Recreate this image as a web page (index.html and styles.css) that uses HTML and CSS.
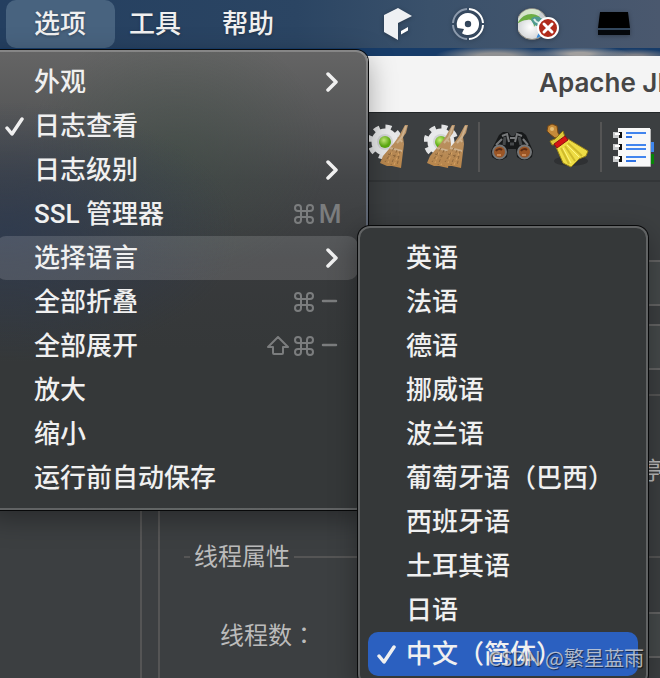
FILE: index.html
```html
<!DOCTYPE html>
<html lang="zh-CN">
<head>
  <meta charset="UTF-8" />
  <meta name="viewport" content="width=device-width, initial-scale=1" />
  <title>Apache JMeter</title>
  <link rel="stylesheet" href="styles.css">
</head>
<body>

  <nav class="menubar">
    <button type="button" class="menu-title open">选项</button>
    <button type="button" class="menu-title">工具</button>
    <button type="button" class="menu-title">帮助</button>

    <div class="status">
      <svg width="34" height="34" viewBox="0 0 34 34">
        <path d="M0 8 14 1 28 9 14 16V33L0 25Z" fill="#eef0f3"/>
        <path d="M17 24 24 20V23.500L17 27.500Z" fill="#fff"/>
      </svg>
      <svg width="32" height="34" viewBox="0 0 32 34">
        <g fill="none" stroke-width="2">
          <path d="M17 2A15 15 0 0 1 31 16M31 18A15 15 0 0 1 17 32" stroke="#fff"/>
          <path d="M15 32A15 15 0 0 1 1 18M1 16A15 15 0 0 1 15 2" stroke="#8d9bad"/>
        </g>
        <path fill="#fff" fill-rule="evenodd" d="M16 6A11 11 0 1 1 10 26.200L12 22 5.500 21A11 11 0 0 1 16 6ZM16 13.800A3.200 3.200 0 1 0 16 20.200 3.200 3.200 0 1 0 16 13.800Z"/>
      </svg>
      <svg width="42" height="34" viewBox="0 0 42 34">
        <defs>
          <radialGradient id="globe" cx=".45" cy=".6"><stop offset="0" stop-color="#fff"/><stop offset="1" stop-color="#c9cdd0"/></radialGradient>
          <clipPath id="globe-clip"><circle cx="14" cy="17" r="15"/></clipPath>
        </defs>
        <circle cx="14" cy="17" r="15.500" fill="url(#globe)" stroke="#8d8a80"/>
        <g clip-path="url(#globe-clip)">
          <path d="M-1 17C3 7 12 5 20 9L24 3 12 0 4 3Z" fill="#d5e5ca"/>
          <path d="M-1 17C4 7 14 4 22 10L16 20C16 14 12 11 9 13 5 13 2 15-1 17Z" fill="#6cae43"/>
          <path d="M13 12C18 7 24 10 29 17L24 20C18 20 14 17 13 12Z" fill="#4f9a91"/>
          <path d="M16 12C18 16 22 17 26 15" fill="none" stroke="#d7ebe4" stroke-width="2"/>
          <path d="M18 33C19 28 21 25 24 23V33Z" fill="#3d8bd4"/>
        </g>
        <circle cx="30" cy="21" r="10" fill="#b02b1c" stroke="#fff" stroke-width="2"/>
        <path d="M26 17 34 25M34 17 26 25" stroke="#fff" stroke-width="3" stroke-linecap="round"/>
      </svg>
      <svg width="40" height="34" viewBox="0 0 40 34">
        <path d="M6 5H34L36 21H4Z" fill="#000"/>
        <path d="M4 23H36V28H4Z" fill="#05080c"/>
        <path d="M4 22H36" stroke="#33475d" stroke-width="2"/>
      </svg>
    </div>
  </nav>

  <main class="window">
    <h1 class="titlebar">Apache JMeter</h1>

    <div class="toolbar">
      <button type="button" class="tool" aria-label="清除">
        <svg width="44" height="48" viewBox="0 0 44 48">
          <defs>
            <radialGradient id="dot" cx=".4" cy=".35"><stop offset="0" stop-color="#c8ef7a"/><stop offset="1" stop-color="#5cab10"/></radialGradient>
            <linearGradient id="straw" x2="0" y2="1"><stop offset="0" stop-color="#b9956c"/><stop offset="1" stop-color="#b8854a"/></linearGradient>
            <g id="gear">
              <circle cx="17" cy="19" r="15" fill="none" stroke="#e3e4e5" stroke-width="5" stroke-dasharray="5.900 5.880"/>
              <circle cx="17" cy="19" r="13.500" fill="#e9eaeb"/>
              <circle cx="17" cy="19" r="8" fill="#d3d4d6"/>
              <circle cx="17" cy="19" r="6" fill="url(#dot)"/>
            </g>
            <g id="besom">
              <path d="M37 2H40L38 10 35 14 36 21 33 45 24 43 19 43 12 40 15 33 26 20 31 13Z" fill="url(#straw)"/>
              <path d="M38 3 34 14 29 20M32 16 34 19M22 25 34 28" fill="none" stroke="#cdb08c" stroke-width="2"/>
              <path d="M26 25 17 39M29 27 23 42M32 28 29 43M20 31 31 34" fill="none" stroke="#8f683d" stroke-dasharray="3 2"/>
              <path d="M24 29 20 40M31 30 26 42" fill="none" stroke="#d6a263" stroke-dasharray="3 2"/>
            </g>
          </defs>
          <use href="#gear"/>
          <use href="#besom"/>
        </svg>
      </button>
      <button type="button" class="tool" aria-label="清除全部">
        <svg width="44" height="48" viewBox="0 0 44 48">
          <use href="#gear"/>
          <use href="#besom" x="-9"/>
          <use href="#besom" x="4"/>
        </svg>
      </button>
      <span class="separator"></span>
      <button type="button" class="tool" aria-label="查找">
        <svg width="44" height="48" viewBox="0 0 44 48">
          <path d="M9 12 13 9H18L21 13H24L27 9H32L36 12 43 28 42 34 37 37H32L27 34 26 26H18L17 34 12 37H7L2 34 1 28Z" fill="#17191a"/>
          <path d="M12 13 17 11 19 19M32 13 27 11 25 19M20 15H25M6 22 12 16M38 22 33 16" stroke="#77797b" stroke-width="2" fill="none"/>
          <path d="M15 14 14 22M29 14 31 22M20 21H24" stroke="#46494b" stroke-width="3"/>
          <circle cx="9.500" cy="29" r="6.500" fill="#9b5525" stroke="#747678" stroke-width="2"/>
          <circle cx="34.500" cy="29" r="6.500" fill="#9b5525" stroke="#747678" stroke-width="2"/>
          <path d="M6 28A4 4 0 0 1 12 27M31 28A4 4 0 0 1 37 27" stroke="#5a2a12" stroke-width="2" fill="none"/>
          <path d="M7 32H11M32 32H36" stroke="#c98855" stroke-width="2"/>
        </svg>
      </button>
      <button type="button" class="tool" aria-label="重置查找">
        <svg width="44" height="48" viewBox="0 0 44 48">
          <ellipse cx="25" cy="38" rx="17" ry="5" fill="#2f3133"/>
          <path d="M2 3 6 1 11 3 12 10 14 13 9 15 4 11 1 8Z" fill="#c58a39" stroke="#724514"/>
          <circle cx="6" cy="6" r="2" fill="#e6bd74"/>
          <path d="M4 18 9 16 17 8 19 14 12 21 6 22Z" fill="#ddc93a" stroke="#8b7813"/>
          <path d="M10 24 22 16 42 28 40 33 33 36 25 44 17 40Z" fill="#eedd45" stroke="#988318"/>
          <path d="M15 25 23 41M19 23 29 38M22 20 36 33" stroke="#d0bb2c" stroke-width="2"/>
          <path d="M17 25 25 40M21 22 33 34" stroke="#fff580"/>
          <path d="M8 21 19 13 22 17 11 25Z" fill="#d61414" stroke="#8d1212"/>
        </svg>
      </button>
      <span class="separator"></span>
      <button type="button" class="tool" aria-label="函数助手">
        <svg width="44" height="48" viewBox="0 0 44 48">
          <path d="M36 19H42V29H36Z" fill="#3f86ec"/>
          <path d="M36 31H42V41H36Z" fill="#078407"/>
          <path d="M6 5H38V43H6Z" fill="#f8f8f8"/>
          <path d="M6 43.500H38.500V6" fill="none" stroke="#b8b8b8"/>
          <path d="M6 9H10V15H6ZM6 21H10V27H6ZM6 33H10V39H6Z" fill="#111"/>
          <path d="M1 9H7V15H1ZM1 21H7V27H1ZM1 33H7V39H1Z" fill="#c9cbcc"/>
          <path d="M3 11H8M3 23H8M3 35H8" stroke="#fff" stroke-width="2"/>
          <path d="M14 10H34M14 22H34M14 26H34M14 34H34" stroke="#4285ee" stroke-width="2"/>
          <path d="M14 14H20M14 38H24" stroke="#2f73e5" stroke-width="2"/>
        </svg>
      </button>
    </div>

    <div class="workspace">
      <aside class="tree"></aside>
      <form class="editor">
        <input type="text" class="field" aria-label="名称" />
        <input type="text" class="field" aria-label="注释" />
        <fieldset class="group actions">
          <label class="action"><input type="radio" name="action" />停</label>
        </fieldset>
        <fieldset class="group">
          <legend>线程属性</legend>
          <div class="row">
            <label for="threads">线程数<span lang="zh-TW">：</span></label>
            <input type="text" class="field" id="threads" />
          </div>
        </fieldset>
      </form>
    </div>
  </main>

  <!-- shared menu glyphs -->
  <svg class="symbols" width="0" height="0">
    <symbol id="check" viewBox="0 0 20 20"><path d="M2 11 7 17 17 2" fill="none" stroke="currentColor" stroke-width="3.500" stroke-linecap="round" stroke-linejoin="round"/></symbol>
    <symbol id="chevron" viewBox="0 0 26 20"><path d="M11 2 19 10 11 18" fill="none" stroke="currentColor" stroke-width="3.500" stroke-linecap="round" stroke-linejoin="round"/></symbol>
    <symbol id="command" viewBox="0 0 26 20"><path d="M10 7H16V13H10ZM10 7V4A3 3 0 1 0 7 7H10M16 7H19A3 3 0 1 0 16 4V7M16 13V16A3 3 0 1 0 19 13H16M10 13H7A3 3 0 1 0 10 16V13" fill="none" stroke="currentColor" stroke-width="2"/></symbol>
    <symbol id="shift" viewBox="0 0 26 20"><path d="M13 1 23 11H18V17Q18 18 17 18H9Q8 18 8 17V11H3Z" fill="none" stroke="currentColor" stroke-width="2" stroke-linejoin="round"/></symbol>
    <symbol id="minus" viewBox="0 0 26 20"><path d="M6 9H19" stroke="currentColor" stroke-width="2.500" stroke-linecap="round"/></symbol>
  </svg>

  <div class="menu options" role="menu">
    <button type="button" class="item" role="menuitem"><span class="label">外观</span><svg class="key"><use href="#chevron"/></svg></button>
    <button type="button" class="item" role="menuitemcheckbox" aria-checked="true"><svg class="check"><use href="#check"/></svg><span class="label">日志查看</span></button>
    <button type="button" class="item" role="menuitem"><span class="label">日志级别</span><svg class="key"><use href="#chevron"/></svg></button>
    <button type="button" class="item" role="menuitem"><span class="label">SSL 管理器</span><span class="shortcut"><svg class="key"><use href="#command"/></svg><span class="key">M</span></span></button>
    <button type="button" class="item active" role="menuitem"><span class="label">选择语言</span><svg class="key"><use href="#chevron"/></svg></button>
    <button type="button" class="item" role="menuitem"><span class="label">全部折叠</span><span class="shortcut"><svg class="key"><use href="#command"/></svg><svg class="key"><use href="#minus"/></svg></span></button>
    <button type="button" class="item" role="menuitem"><span class="label">全部展开</span><span class="shortcut"><svg class="key"><use href="#shift"/></svg><svg class="key"><use href="#command"/></svg><svg class="key"><use href="#minus"/></svg></span></button>
    <button type="button" class="item" role="menuitem"><span class="label">放大</span></button>
    <button type="button" class="item" role="menuitem"><span class="label">缩小</span></button>
    <button type="button" class="item" role="menuitem"><span class="label">运行前自动保存</span></button>
  </div>

  <div class="menu languages" role="menu">
    <button type="button" class="item" role="menuitemradio"><span class="label">英语</span></button>
    <button type="button" class="item" role="menuitemradio"><span class="label">法语</span></button>
    <button type="button" class="item" role="menuitemradio"><span class="label">德语</span></button>
    <button type="button" class="item" role="menuitemradio"><span class="label">挪威语</span></button>
    <button type="button" class="item" role="menuitemradio"><span class="label">波兰语</span></button>
    <button type="button" class="item" role="menuitemradio"><span class="label">葡萄牙语（巴西）</span></button>
    <button type="button" class="item" role="menuitemradio"><span class="label">西班牙语</span></button>
    <button type="button" class="item" role="menuitemradio"><span class="label">土耳其语</span></button>
    <button type="button" class="item" role="menuitemradio"><span class="label">日语</span></button>
    <button type="button" class="item selected" role="menuitemradio" aria-checked="true"><svg class="check"><use href="#check"/></svg><span class="label">中文（简体）</span></button>
  </div>

  <div class="watermark">CSDN @繁星蓝雨</div>

</body>
</html>
```

FILE: styles.css
```css
* {
  box-sizing: border-box;
}
body {
  position: relative;
  margin: 0;
  height: 100vh;
  overflow: hidden;
  display: flex;
  flex-direction: column;
  font-family: Inter, "Noto Sans CJK SC", sans-serif;
  font-size: 26px;
  color: #f0f0f0;
  background: #3c3f41;
}
button {
  font: inherit;
  color: inherit;
  border: none;
  background: none;
  padding: 0;
}

/* menu bar */
.menubar {
  flex: none;
  display: flex;
  align-items: center;
  height: 48px;
  padding-left: 6px;
  background: linear-gradient(90deg, #243f60, #2b4563 45%, #3a516b 65%, #4a586e);
}
.menu-title {
  flex: none;
  height: 48px;
  padding: 0 14px;
  margin-right: 13px;
  border-radius: 10px;
  font-weight: 500;
  line-height: 46px;
  text-shadow: 0 1px 3px rgba(0, 0, 0, 0.3);
}
.menu-title.open {
  padding: 0 29px 0 28px;
  margin-right: 0;
  background: #48637f;
}
.status {
  display: flex;
  align-items: center;
  gap: 34px;
  margin-left: 83px;
}
.status svg {
  flex: none;
  filter: drop-shadow(0 1px 2px rgba(0, 0, 0, 0.3));
}

/* application window, with a strip of wallpaper above it */
.window {
  flex: 1;
  display: flex;
  flex-direction: column;
  min-height: 0;
  padding-top: 8px;
  background:
    radial-gradient(ellipse 60px 10px at 495px 8px, #8f9092 30%, transparent),
    radial-gradient(ellipse 50px 8px at 580px 6px, #a19f9e 20%, transparent),
    radial-gradient(ellipse 40px 7px at 635px 8px, #7d7f86 20%, transparent),
    #173c69;
}
.titlebar {
  flex: none;
  height: 56px;
  margin: 0;
  padding-left: 539px;
  overflow: hidden;
  white-space: nowrap;
  font-size: 26px;
  font-weight: 600;
  line-height: 54px;
  color: #464646;
  background: #f4f4f4;
}
.toolbar {
  flex: none;
  display: flex;
  align-items: center;
  gap: 10px;
  height: 70px;
  padding-left: 368px;
  background: #3c3f41;
  border-top: 1px solid #24282a;
  border-bottom: 2px solid #333638;
}
.tool {
  flex: none;
  width: 44px;
  height: 48px;
}
.tool svg {
  display: block;
}
.tool + .tool {
  margin-left: 2px;
}
.separator {
  flex: none;
  width: 2px;
  height: 50px;
  background: #555555;
}
.workspace {
  flex: 1;
  display: flex;
  gap: 16px;
  min-height: 0;
  background: #3c3f41;
}
.tree {
  width: 142px;
  border-right: 2px solid #555555;
}
.editor {
  flex: 1;
  min-width: 0;
  padding: 78px 0 0 24px;
  border-left: 2px solid #555555;
  font-size: 24px;
  color: #bbbbbb;
}
.field {
  display: block;
  width: 100%;
  height: 46px;
  margin-bottom: 18px;
  border: 2px solid #646464;
  border-right: none;
  background: #45494a;
}
.group {
  margin: 0;
  padding: 0;
  border: none;
  border-top: 2px solid #555555;
}
.group legend {
  margin-left: 6px;
  padding: 0 4px;
  line-height: 34px;
}
.actions {
  display: flex;
  justify-content: flex-end;
  height: 146px;
  margin-top: 24px;
  padding-top: 54px;
}
.action {
  display: flex;
  align-items: center;
  gap: 10px;
  height: 36px;
  margin-right: -2px;
}
.action input {
  margin: 0;
}
.row {
  display: flex;
  align-items: center;
  gap: 60px;
  padding: 38px 0 0 36px;
}
.row label {
  flex: none;
  line-height: 34px;
}
.row label span {
  font-family: "Noto Sans CJK TC", sans-serif;
}
.row .field {
  margin: 0;
}

/* drop-down menus */
.symbols {
  position: absolute;
}
.menu {
  position: absolute;
  padding: 8px;
  border: 2px solid rgba(255, 255, 255, 0.22);
  border-radius: 12px;
  font-family: Roboto, "Noto Sans CJK SC", sans-serif;
  background: #353839 border-box;
  box-shadow: 0 0 0 1px #08090a, 0 8px 28px rgba(0, 0, 0, 0.35);
}
.options {
  top: 50px;
  left: -14px;
  width: 382px;
  background:
    radial-gradient(ellipse 230px 130px at 20px 180px, rgba(44, 58, 82, 0.75), transparent),
    radial-gradient(ellipse 150px 130px at 190px 100px, rgba(62, 78, 68, 0.45), transparent),
    linear-gradient(#656565, #545556 75px, #444648 130px, #383a3c 210px, #353839 300px) border-box;
}
.languages {
  top: 226px;
  left: 358px;
  width: 290px;
}
.item {
  position: relative;
  display: flex;
  align-items: center;
  justify-content: space-between;
  width: 100%;
  height: 44px;
  padding: 0 15px 0 38px;
  border-radius: 10px;
  font-weight: 500;
  line-height: 46px;
  text-align: left;
  white-space: nowrap;
}
.item.active {
  background: rgba(255, 255, 255, 0.14);
}
.item.selected {
  background: #2b60c0;
}
.check {
  position: absolute;
  left: 9px;
  top: 13px;
  width: 20px;
  height: 20px;
}
.shortcut {
  display: flex;
  align-items: center;
  color: #7b7d7e;
}
.key {
  width: 26px;
  text-align: center;
}
svg.key {
  height: 20px;
}

.watermark {
  position: absolute;
  right: 16px;
  bottom: 4px;
  font-family: "Noto Sans CJK SC", sans-serif;
  font-size: 20px;
  line-height: 32px;
  color: rgba(225, 225, 225, 0.75);
  text-shadow: 1px 1px 1px rgba(0, 0, 0, 0.6);
}
```
